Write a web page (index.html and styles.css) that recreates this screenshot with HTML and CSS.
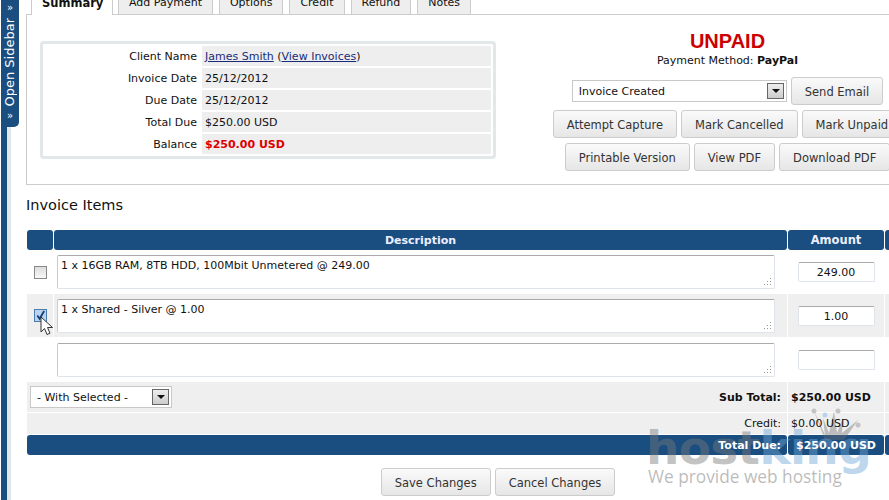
FILE: index.html
```html
<!DOCTYPE html>
<html lang="en">

<head>
    <meta charset="UTF-8">
    <title>Invoice</title>
    <link rel="stylesheet" href="styles.css">
</head>

<body>
    <div class="page">
        <div class="sidebar">
            <div class="sidebar_tab">
                <span class="sidebar_arrow">»</span>
                <span class="sidebar_text">Open Sidebar</span>
                <span class="sidebar_arrow">»</span>
            </div>
            <div class="sidebar_strip"></div>
        </div>

        <div class="content">
            <ul class="tabs">
                <li class="tab active">Summary</li>
                <li class="tab">Add Payment</li>
                <li class="tab">Options</li>
                <li class="tab">Credit</li>
                <li class="tab">Refund</li>
                <li class="tab">Notes</li>
            </ul>

            <div class="tab_box">
                <div class="info_box">
                    <div class="info_row">
                        <div class="info_label">Client Name</div>
                        <div class="info_value"><a href="#">James Smith</a> (<a href="#">View Invoices</a>)</div>
                    </div>
                    <div class="info_row">
                        <div class="info_label">Invoice Date</div>
                        <div class="info_value">25/12/2012</div>
                    </div>
                    <div class="info_row">
                        <div class="info_label">Due Date</div>
                        <div class="info_value">25/12/2012</div>
                    </div>
                    <div class="info_row">
                        <div class="info_label">Total Due</div>
                        <div class="info_value">$250.00 USD</div>
                    </div>
                    <div class="info_row">
                        <div class="info_label">Balance</div>
                        <div class="info_value balance">$250.00 USD</div>
                    </div>
                </div>

                <div class="status_box">
                    <div class="status">UNPAID</div>
                    <div class="method">Payment Method: <b>PayPal</b></div>
                    <div class="action_row email_row">
                        <div class="select email_select">
                            <span>Invoice Created</span>
                            <span class="select_btn"></span>
                        </div>
                        <button class="btn">Send Email</button>
                    </div>
                    <div class="action_row">
                        <button class="btn">Attempt Capture</button>
                        <button class="btn">Mark Cancelled</button>
                        <button class="btn">Mark Unpaid</button>
                    </div>
                    <div class="action_row">
                        <button class="btn">Printable Version</button>
                        <button class="btn">View PDF</button>
                        <button class="btn">Download PDF</button>
                    </div>
                </div>
            </div>

            <h2 class="items_title">Invoice Items</h2>

            <table class="items">
                <tr class="head">
                    <th class="col_check round"></th>
                    <th class="col_desc round">Description</th>
                    <th class="col_amount round">Amount</th>
                    <th class="col_extra round"></th>
                </tr>
                <tr class="item first">
                    <td class="check_cell"><span class="check"></span></td>
                    <td><div class="desc">1 x 16GB RAM, 8TB HDD, 100Mbit Unmetered @ 249.00<span class="grip"></span></div></td>
                    <td class="amount_cell"><div class="amount">249.00</div></td>
                    <td></td>
                </tr>
                <tr class="item grey">
                    <td class="check_cell">
                        <span class="check checked">
                            <svg class="tick" viewBox="0 0 12 12"><path d="M2.500 6l2.500 3.500L10 1" fill="none" stroke="#1a3f78" stroke-width="2"/></svg>
                        </span>
                        <svg class="cursor" viewBox="0 0 14 20"><path d="M1 1v15l3.500-3.500 2.500 6 3-1.300-2.500-5.700h5z" fill="#fff" stroke="#333" stroke-width="1"/></svg>
                    </td>
                    <td><div class="desc">1 x Shared - Silver @ 1.00<span class="grip"></span></div></td>
                    <td class="amount_cell"><div class="amount">1.00</div></td>
                    <td></td>
                </tr>
                <tr class="item">
                    <td></td>
                    <td><div class="desc"><span class="grip"></span></div></td>
                    <td class="amount_cell"><div class="amount"></div></td>
                    <td></td>
                </tr>
                <tr class="grey sub">
                    <td colspan="2">
                        <div class="sub_cell">
                            <div class="select with_select">
                                <span>- With Selected -</span>
                                <span class="select_btn"></span>
                            </div>
                            <b>Sub Total:</b>
                        </div>
                    </td>
                    <td class="money"><b>$250.00 USD</b></td>
                    <td></td>
                </tr>
                <tr class="grey credit">
                    <td colspan="2" class="label_end">Credit:</td>
                    <td class="money"><span class="over">$0.00 USD</span></td>
                    <td></td>
                </tr>
                <tr class="total">
                    <td colspan="2" class="label_end round"><b class="over">Total Due:</b></td>
                    <td class="round total_amount"><b class="over">$250.00 USD</b></td>
                    <td class="round"></td>
                </tr>
            </table>

            <div class="save_row">
                <button class="btn">Save Changes</button>
                <button class="btn">Cancel Changes</button>
            </div>
        </div>
    </div>

    <div class="watermark">
        <svg class="crown" viewBox="0 0 50 34">
            <path d="M3 4l11 24 -2-17 6 15 5-22 3 22 6-15 -1 15 16-13 -14 20H14z" fill="rgba(110,110,110,0.4)"/>
            <circle cx="3" cy="4" r="2.500" fill="#c4c4c4"/>
            <circle cx="14" cy="8" r="2.500" fill="#b9d3ea"/>
            <circle cx="27" cy="4" r="2.500" fill="#c4c4c4"/>
            <circle cx="47" cy="18" r="2.500" fill="#c4c4c4"/>
        </svg>
        <div class="wm_logo"><span class="wm_host">host</span><span class="wm_king">king</span></div>
        <div class="wm_tag">We provide web hosting</div>
    </div>
</body>

</html>
```

FILE: styles.css
```css
* {
    margin: 0;
    padding: 0;
    box-sizing: border-box;
}

html,
body {
    width: 889px;
    height: 500px;
    overflow: hidden;
    background: white;
}

body {
    position: relative;
    font-family: "DejaVu Sans", sans-serif;
    font-size: 11px;
    color: #111;
}

a {
    color: #1a2a78;
}

.page {
    display: flex;
    height: 500px;
}

/* sidebar strip */
.sidebar {
    width: 25px;
    flex-shrink: 0;
    margin-left: 1px;
}

.sidebar_tab {
    width: 18px;
    height: 127px;
    background: #1a4e80;
    border-bottom-right-radius: 5px;
    color: white;
    display: flex;
    flex-direction: column;
    align-items: center;
    justify-content: space-between;
    padding: 3px 0 6px;
}

.sidebar_strip {
    width: 10px;
    height: 373px;
    background: #1a4e80;
    border-right: 4px solid #e2e8ea;
}

.sidebar_text {
    writing-mode: vertical-rl;
    transform: rotate(180deg);
    font-size: 13px;
    line-height: 16px;
    white-space: nowrap;
}

.sidebar_arrow {
    font-size: 10px;
    line-height: 10px;
}

.content {
    width: 863px;
    flex-shrink: 0;
}

/* tabs */
.tabs {
    list-style: none;
    display: flex;
    height: 14px;
    padding-left: 5px;
    gap: 6px;
    align-items: flex-end;
}

.tab {
    height: 21px;
    line-height: 18px;
    padding: 0 10px;
    background: #eee;
    border: 1px solid #ccc;
    border-bottom: none;
    white-space: nowrap;
}

.tab.active {
    width: 82px;
    margin-right: -1px;
    background: white;
    font-size: 11.5px;
    font-weight: bold;
    border-top: none;
    height: 15px;
    margin-bottom: -1px;
    line-height: 6px;
    padding: 0 10px;
}

.tab_box {
    height: 171px;
    border: 1px solid #ccc;
    border-right: none;
    display: flex;
    padding: 26px 0 0 13px;
}

.info_box {
    width: 456px;
    height: 118px;
    flex-shrink: 0;
    border: 3px solid #e2e8ea;
    border-radius: 4px;
    padding: 2px 2px 0 0;
}

.info_row {
    display: flex;
    height: 22px;
    line-height: 22px;
}

.info_label {
    width: 159px;
    padding-right: 5px;
    text-align: right;
}

.info_value {
    flex: 1;
    height: 20px;
    background: #eee;
    padding-left: 3px;
}

.balance {
    color: #d00;
    font-weight: bold;
}

/* status and buttons */
.status_box {
    width: 401px;
    flex-shrink: 0;
    margin-left: 31px;
    margin-top: -11px;
    display: flex;
    flex-direction: column;
    align-items: center;
}

.status {
    font-family: "Liberation Sans", sans-serif;
    font-weight: bold;
    font-size: 20px;
    color: #c00;
    line-height: 22px;
}

.method {
    padding-top: 1px;
    line-height: 16px;
    margin-bottom: 8px;
}

.action_row {
    display: flex;
    gap: 4px;
    margin-top: 5px;
    white-space: nowrap;
}

.email_row {
    margin-top: 0;
    align-items: center;
}

.btn {
    height: 28px;
    padding: 1px 13px 0;
    font-family: inherit;
    font-size: 11.5px;
    color: #333;
    background: linear-gradient(#fafafa, #e6e6e6);
    border: 1px solid #ccc;
    border-radius: 3px;
    white-space: nowrap;
}

.select {
    display: flex;
    align-items: center;
    justify-content: space-between;
    background: white;
    border: 1px solid #c8c8c8;
}

.email_select {
    width: 215px;
    height: 22px;
    padding: 0 2px 0 6px;
}

.with_select {
    width: 142px;
    height: 22px;
    padding: 0 2px 0 6px;
}

.select_btn {
    width: 17px;
    height: 16px;
    border: 1px solid #666;
    background: linear-gradient(#eee, #ccc);
    position: relative;
}

.select_btn::after {
    content: "";
    position: absolute;
    left: 4px;
    top: 5px;
    border: 4px solid transparent;
    border-top-color: #111;
    border-bottom: none;
}

/* items */
.items_title {
    font-weight: normal;
    font-size: 14.5px;
    line-height: 20px;
    margin-top: 10px;
    margin-bottom: 14px;
}

.items {
    width: 880px;
    border-collapse: separate;
    border-spacing: 1px;
    table-layout: fixed;
}

.items td {
    padding: 0;
    vertical-align: top;
}

.head th {
    height: 20px;
    background: #1a4e80;
    color: #eef;
    font-size: 11px;
}

.round {
    border-radius: 3px;
}

.col_check {
    width: 26px;
}

.col_desc {
    width: 733px;
}

.head .col_amount {
    width: 96px;
    font-size: 11.5px;
}

.col_extra {
    width: 20px;
}

.grey td {
    background: #efefef;
}

.item td {
    height: 43px;
}

.item.first td {
    height: 42px;
}

.items td.check_cell {
    vertical-align: middle;
    text-align: center;
    position: relative;
}

.check {
    display: inline-block;
    width: 13px;
    height: 13px;
    border: 1px solid #888;
    background: linear-gradient(#ddd, #f8f8f8);
    vertical-align: middle;
    position: relative;
}

.check.checked {
    border-color: #4a7cb0;
    background: #b8d4f0;
}

.tick {
    position: absolute;
    left: 0;
    top: 0;
    width: 11px;
    height: 11px;
}

.cursor {
    position: absolute;
    left: 13px;
    top: 22px;
    width: 14px;
    height: 20px;
}

.desc {
    position: relative;
    height: 34px;
    margin: 5px 12px 0 3px;
    padding: 3px 3px;
    background: white;
    border: 1px solid #dfe4ea;
    border-top-color: #aaa;
    border-left-color: #ccc;
    border-radius: 2px;
}

.item.first .desc {
    margin-top: 4px;
}

.grip {
    position: absolute;
    right: 3px;
    bottom: 3px;
    width: 8px;
    height: 8px;
    background: radial-gradient(circle, #999 0.8px, transparent 1px) 0 0 / 3px 3px;
    clip-path: polygon(100% 0, 100% 100%, 0 100%);
}

.items td.amount_cell {
    text-align: center;
    vertical-align: middle;
}

.amount {
    display: inline-block;
    vertical-align: middle;
    width: 77px;
    height: 20px;
    line-height: 20px;
    background: white;
    border: 1px solid #dfe4ea;
    border-top-color: #aaa;
    border-radius: 2px;
}

.sub_cell {
    display: flex;
    justify-content: space-between;
    align-items: center;
    height: 30px;
    padding: 0 6px 0 3px;
}

.sub td {
    height: 30px;
}

.credit td {
    height: 21px;
    line-height: 21px;
}

.items td.money {
    vertical-align: middle;
    padding-left: 3px;
}

.items td.label_end {
    vertical-align: middle;
    text-align: right;
    padding-right: 6px;
}

.total td {
    height: 20px;
    background: #1a4e80;
    color: white;
}

.items td.total_amount {
    text-align: center;
    vertical-align: middle;
}

/* these few sit above the watermark */
.over {
    position: relative;
    z-index: 1;
}

.save_row {
    display: flex;
    justify-content: center;
    gap: 4px;
    margin-top: 12px;
    width: 944px;
}

/* watermark over the corner */
.watermark {
    position: absolute;
    left: 640px;
    top: 405px;
    width: 245px;
    height: 85px;
    pointer-events: none;
}

.crown {
    position: absolute;
    left: 171px;
    top: 2px;
    width: 50px;
    height: 34px;
}

.wm_logo {
    position: absolute;
    left: 6px;
    top: 13px;
    font-family: "DejaVu Sans", sans-serif;
    font-weight: bold;
    font-size: 47px;
    line-height: 60px;
    letter-spacing: -0.7px;
    white-space: nowrap;
}

.wm_host {
    color: rgba(120, 120, 120, 0.45);
}

.wm_king {
    color: rgba(110, 165, 215, 0.45);
}

.wm_tag {
    position: absolute;
    left: 8px;
    top: 60px;
    font-family: "Open Sans", sans-serif;
    font-size: 17.3px;
    line-height: 24px;
    color: rgba(120, 120, 120, 0.5);
    white-space: nowrap;
}
```
